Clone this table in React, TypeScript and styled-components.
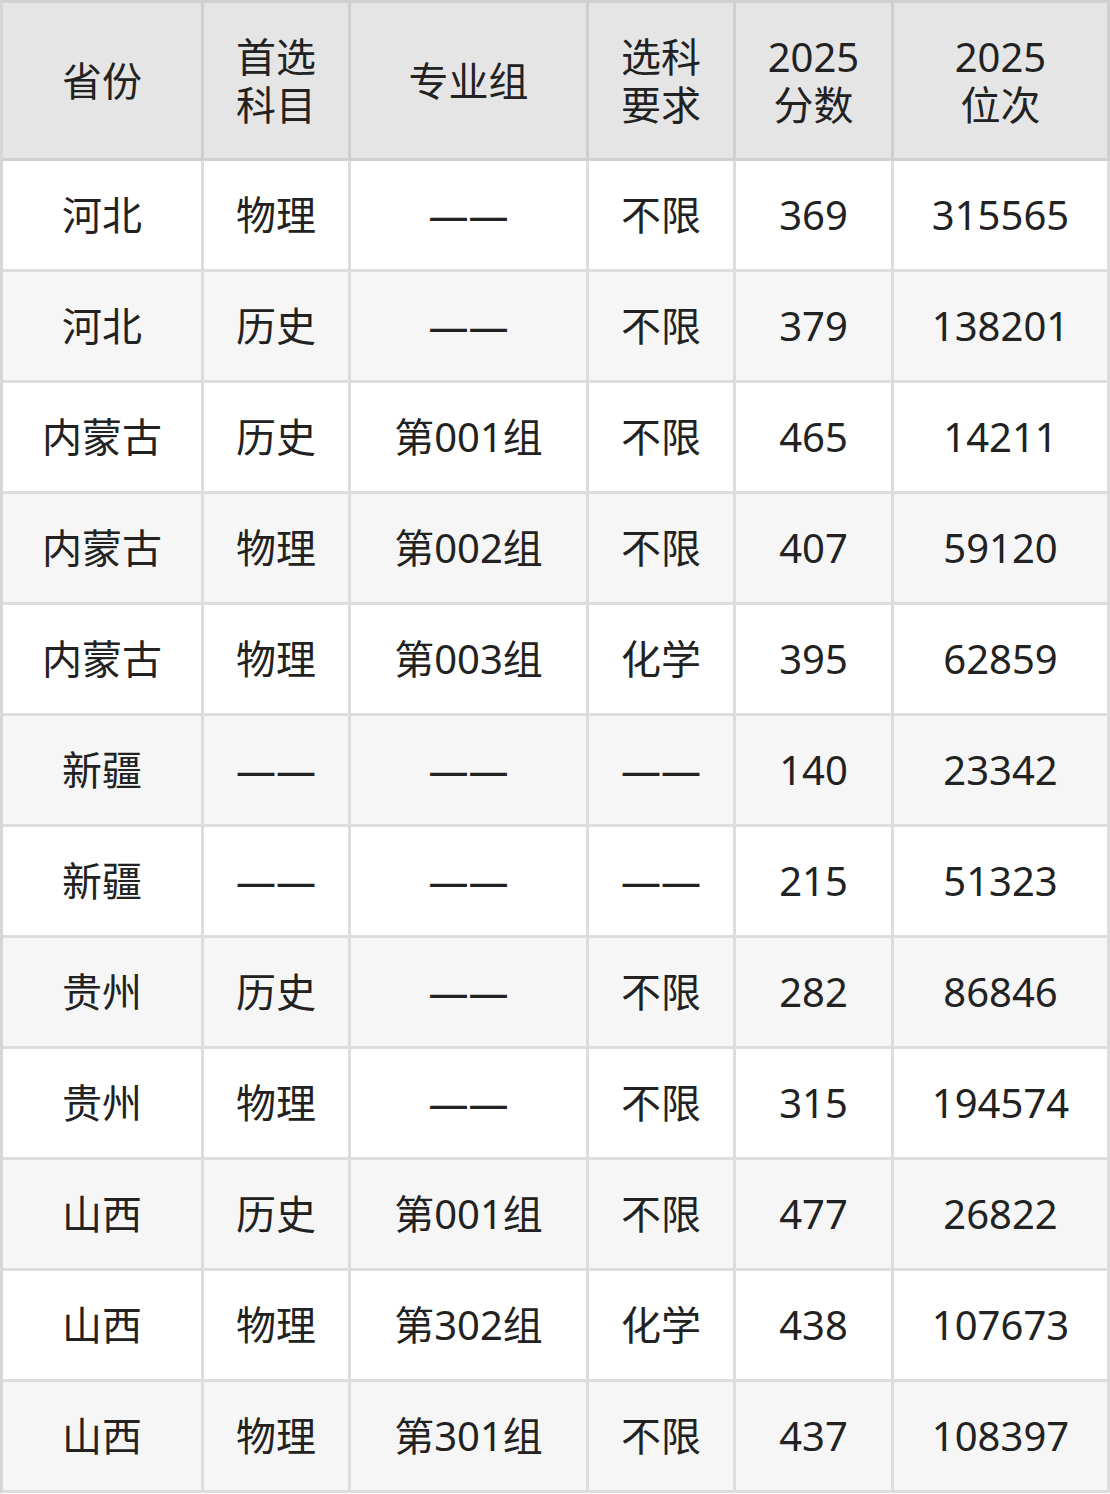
import React from 'react';
import styled, {createGlobalStyle} from 'styled-components';

const GlobalStyle = createGlobalStyle`
  html, body {
    margin: 0;
    padding: 0;
    background: #ffffff;
  }
  body {
    font-family: "Noto Sans", "Noto Sans CJK SC", sans-serif;
  }
`;

type Row = [string, string, string, string, string, string];

const columns = [198, 144, 235, 144, 155, 213];

const headers: string[][] = [
    ['省份'],
    ['首选', '科目'],
    ['专业组'],
    ['选科', '要求'],
    ['2025', '分数'],
    ['2025', '位次'],
];

const rows: Row[] = [
    ['河北', '物理', '——', '不限', '369', '315565'],
    ['河北', '历史', '——', '不限', '379', '138201'],
    ['内蒙古', '历史', '第001组', '不限', '465', '14211'],
    ['内蒙古', '物理', '第002组', '不限', '407', '59120'],
    ['内蒙古', '物理', '第003组', '化学', '395', '62859'],
    ['新疆', '——', '——', '——', '140', '23342'],
    ['新疆', '——', '——', '——', '215', '51323'],
    ['贵州', '历史', '——', '不限', '282', '86846'],
    ['贵州', '物理', '——', '不限', '315', '194574'],
    ['山西', '历史', '第001组', '不限', '477', '26822'],
    ['山西', '物理', '第302组', '化学', '438', '107673'],
    ['山西', '物理', '第301组', '不限', '437', '108397'],
];

const Table = styled.table`
  width: 1110px;
  border-collapse: separate;
  border-spacing: 0;
  table-layout: fixed;
  border-left: 3px solid #d6d6d6;
  border-top: 3px solid #d0d0d0;
  color: #222222;
  font-size: 40px;
`;

const HeadCell = styled.th`
  height: 155px;
  padding: 0;
  background: #e5e5e5;
  border-right: 3px solid #d0d0d0;
  border-bottom: 3px solid #d0d0d0;
  font-weight: 400;
  line-height: 48px;
  text-align: center;
  vertical-align: middle;
`;

const BodyRow = styled.tr<{ $striped: boolean }>`
  background: ${({$striped}) => ($striped ? '#f6f6f6' : '#ffffff')};
`;

const Cell = styled.td`
  height: 108px;
  padding: 0;
  border-right: 3px solid #dddddd;
  border-bottom: 3px solid #dddddd;
  text-align: center;
  vertical-align: middle;
  white-space: nowrap;
  line-height: 48px;
`;

export default function App(): React.ReactElement {
    return (
        <>
            <GlobalStyle/>
            <Table>
                <colgroup>
                    {columns.map((w, i) => (
                        <col key={i} style={{width: w + 3}}/>
                    ))}
                </colgroup>
                <thead>
                <tr>
                    {headers.map((lines, i) => (
                        <HeadCell key={i}>
                            {lines.map((line, j) => (
                                <React.Fragment key={j}>
                                    {j > 0 && <br/>}
                                    {line}
                                </React.Fragment>
                            ))}
                        </HeadCell>
                    ))}
                </tr>
                </thead>
                <tbody>
                {rows.map((row, i) => (
                    <BodyRow key={i} $striped={i % 2 === 1}>
                        {row.map((value, j) => (
                            <Cell key={j}>{value}</Cell>
                        ))}
                    </BodyRow>
                ))}
                </tbody>
            </Table>
        </>
    );
}
